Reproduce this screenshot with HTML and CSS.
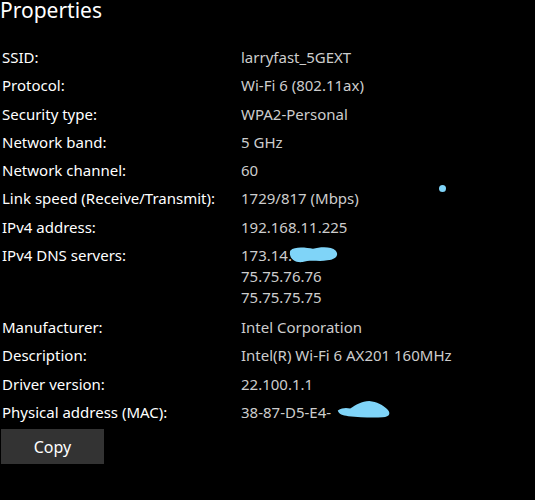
FILE: index.html
```html
<!DOCTYPE html>
<html>
<head>
<meta charset="utf-8">
<link rel="stylesheet" href="styles.css">
</head>
<body>
<div class="page">
  <h1 class="title">Properties</h1>
  <div class="props">
    <div class="label">SSID:</div><div class="value">larryfast_5GEXT</div>
    <div class="label">Protocol:</div><div class="value">Wi-Fi 6 (802.11ax)</div>
    <div class="label">Security type:</div><div class="value">WPA2-Personal</div>
    <div class="label">Network band:</div><div class="value">5 GHz</div>
    <div class="label">Network channel:</div><div class="value">60</div>
    <div class="label">Link speed (Receive/Transmit):</div><div class="value">1729/817 (Mbps)</div>
    <div class="label">IPv4 address:</div><div class="value">192.168.11.225</div>
    <div class="label">IPv4 DNS servers:</div>
    <div class="value multi"><span class="blobbed">173.14.<svg class="blob blob-dns" viewBox="0 0 54 20" width="54" height="19"><path d="M3 6 C8 1 20 3 27 4 C34 2 46 1 51 6 C55 11 50 16 42 16 C34 18 24 15 16 18 C8 19 1 14 3 6 Z" fill="#7fd4f8"/></svg></span><span>75.75.76.76</span><span>75.75.75.75</span></div>
    <div class="label">Manufacturer:</div><div class="value">Intel Corporation</div>
    <div class="label">Description:</div><div class="value">Intel(R) Wi-Fi 6 AX201 160MHz</div>
    <div class="label">Driver version:</div><div class="value">22.100.1.1</div>
    <div class="label">Physical address (MAC):</div>
    <div class="value"><span class="blobbed">38-87-D5-E4-<svg class="blob blob-mac" viewBox="0 0 58 22" width="57" height="21"><path d="M1 12 C6 9 10 9 14 10 C20 6 26 2 34 2 C42 3 48 6 52 10 C57 14 56 19 48 19 C38 20 24 19 12 18 C6 17 2 16 1 12 Z" fill="#7fd4f8"/></svg></span></div>
  </div>
  <button class="copy">Copy</button>
  <span class="dot"></span>
</div>
</body>
</html>
```
FILE: styles.css
```css
html, body {
  margin: 0;
  padding: 0;
  background: #000;
}
.page {
  position: relative;
  width: 535px;
  height: 500px;
  overflow: hidden;
  font-family: "Noto Sans", "Open Sans", sans-serif;
  color: #fff;
}
.title {
  margin: 0;
  font-weight: 400;
  font-size: 21px;
  line-height: 20px;
  height: 21px;
  padding-bottom: 22px;
  color: #fff;
}
.props {
  display: grid;
  grid-template-columns: 239px 1fr;
  grid-template-rows: repeat(7, 28.3px) 72px repeat(4, 28.3px);
  padding-left: 2px;
  font-size: 15px;
  line-height: 28.3px;
}
.label {
  color: #fff;
}
.value {
  color: #cdcdcd;
}
.multi {
  display: flex;
  flex-direction: column;
  line-height: 21px;
  padding-top: 4px;
  height: 72px;
  box-sizing: border-box;
}
.blobbed {
  position: relative;
}
.blob {
  position: absolute;
}
.blob-dns {
  left: 45px;
  top: 0px;
}
.blob-mac {
  left: 95px;
  top: -3px;
}
.copy {
  display: block;
  margin: 3px 0 0 1px;
  width: 103px;
  height: 35px;
  border: none;
  background: #333;
  color: #fff;
  font-family: "Noto Sans", "Open Sans", sans-serif;
  font-size: 16px;
  padding: 0;
}
.dot {
  position: absolute;
  left: 439px;
  top: 185px;
  width: 7px;
  height: 7px;
  border-radius: 50%;
  background: #7fd4f8;
}
```
